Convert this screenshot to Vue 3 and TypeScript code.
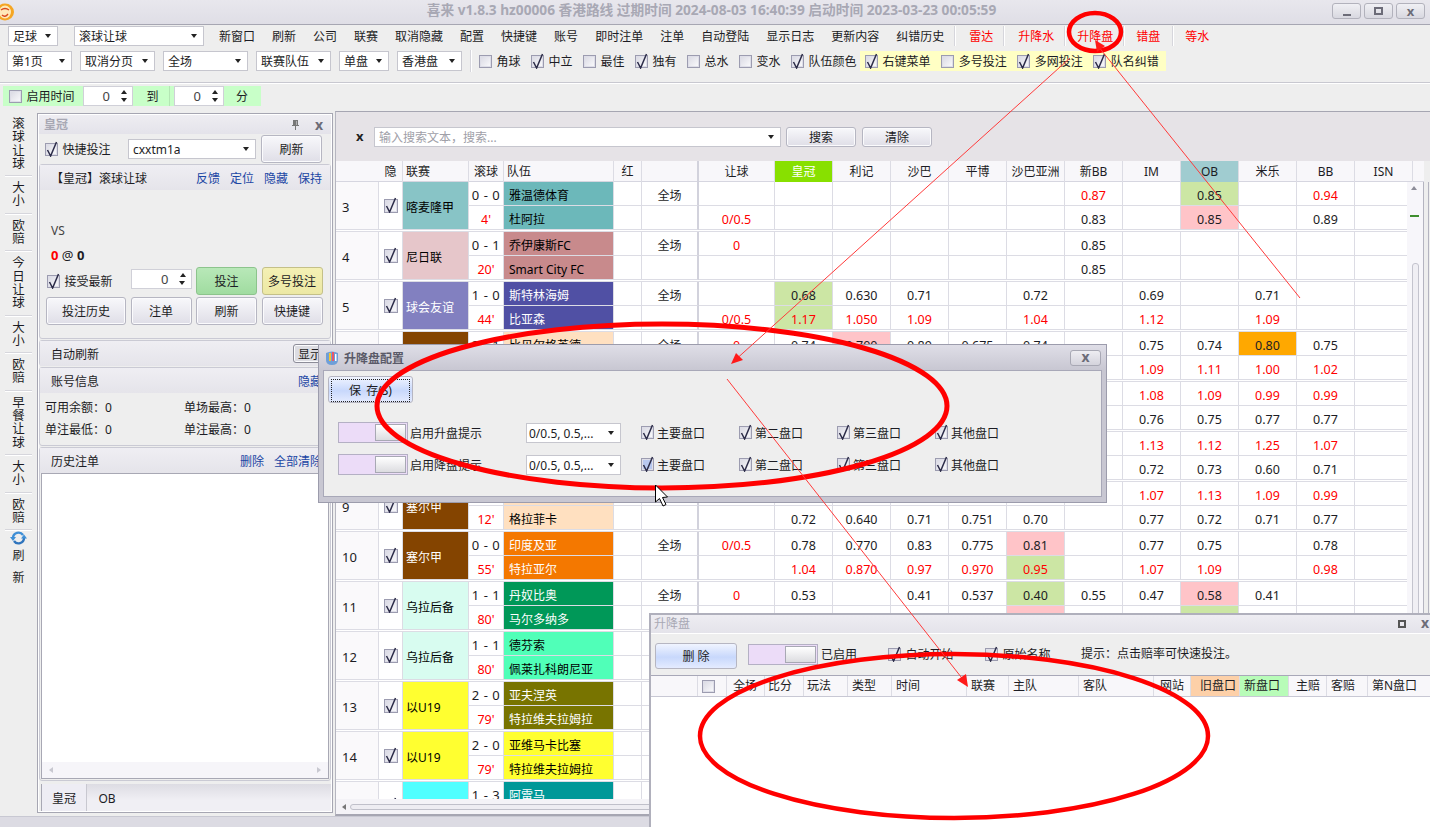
<script setup lang="ts">
interface Row {
  no: number
  league: string
  leagueBg: string
  leagueFg: string
  score: string
  min: string
  teams: string[]
  teamBg: string
  teamFg: string
  half: string
  hcap: string[]
  odds: string[]
}

interface Cell {
  text: string
  cls: string
}

const B = '#fff'
const K = '#000'

// odds line: "-" is an empty cell, suffix r = red text, g/p/o = cell colour
const rows: Row[] = [
  { no: 3, league: '喀麦隆甲', leagueBg: '#88c4c6', leagueFg: K, score: '0 - 0', min: "4'", teams: ['雅温德体育', '杜阿拉'], teamBg: '#6cb8ba', teamFg: K, half: '全场', hcap: ['', '0/0.5'],
    odds: ['- - - - - 0.87r - 0.85g - 0.94r -', '- - - - - 0.83 - 0.85p - 0.89 -'] },
  { no: 4, league: '尼日联', leagueBg: '#e6c6ca', leagueFg: K, score: '0 - 1', min: "20'", teams: ['乔伊康斯FC', 'Smart City FC'], teamBg: '#c88a8c', teamFg: K, half: '全场', hcap: ['0', ''],
    odds: ['- - - - - 0.85 - - - - -', '- - - - - 0.85 - - - - -'] },
  { no: 5, league: '球会友谊', leagueBg: '#8280c0', leagueFg: B, score: '1 - 0', min: "44'", teams: ['斯特林海姆', '比亚森'], teamBg: '#5050a4', teamFg: B, half: '全场', hcap: ['', '0/0.5'],
    odds: ['0.68g 0.630 0.71 - 0.72 - 0.69 - 0.71 - -', '1.17gr 1.050r 1.09r - 1.04r - 1.12r - 1.09r - -'] },
  { no: 6, league: '塞尔甲', leagueBg: '#844400', leagueFg: B, score: '2 - 1', min: "30'", teams: ['比贝尔格英德', '格拉菲卡'], teamBg: '#ffe0c0', teamFg: K, half: '全场', hcap: ['0', ''],
    odds: ['0.74 0.700p 0.89 0.675 0.74 - 0.75 0.74 0.80o 0.75 -', '- - - - - - 1.09r 1.11r 1.00r 1.02r -'] },
  { no: 7, league: '塞尔甲', leagueBg: '#844400', leagueFg: B, score: '', min: '', teams: ['', ''], teamBg: '#ffe0c0', teamFg: K, half: '', hcap: ['', ''],
    odds: ['- - - - - - 1.08r 1.09r 0.99r 0.99r -', '- - - - - - 0.76 0.75 0.77 0.77 -'] },
  { no: 8, league: '塞尔甲', leagueBg: '#844400', leagueFg: B, score: '', min: '', teams: ['', ''], teamBg: '#ffe0c0', teamFg: K, half: '', hcap: ['', ''],
    odds: ['- - - - - - 1.13r 1.12r 1.25r 1.07r -', '- - - - - - 0.72 0.73 0.60 0.71 -'] },
  { no: 9, league: '塞尔甲', leagueBg: '#844400', leagueFg: B, score: '', min: "12'", teams: ['', '格拉菲卡'], teamBg: '#ffe0c0', teamFg: K, half: '', hcap: ['', ''],
    odds: ['- - - - - - 1.07r 1.13r 1.09r 0.99r -', '0.72 0.640 0.71 0.751 0.70 - 0.77 0.72 0.71 0.77 -'] },
  { no: 10, league: '塞尔甲', leagueBg: '#844400', leagueFg: B, score: '0 - 0', min: "55'", teams: ['印度及亚', '特拉亚尔'], teamBg: '#f47800', teamFg: B, half: '全场', hcap: ['0/0.5', ''],
    odds: ['0.78 0.770 0.83 0.775 0.81p - 0.77 0.75 - 0.78 -', '1.04r 0.870r 0.97r 0.970r 0.95gr - 1.07r 1.09r - 0.98r -'] },
  { no: 11, league: '乌拉后备', leagueBg: '#d8fcf0', leagueFg: K, score: '1 - 1', min: "80'", teams: ['丹奴比奥', '马尔多纳多'], teamBg: '#009858', teamFg: B, half: '全场', hcap: ['0', ''],
    odds: ['0.53 - 0.41 0.537 0.40g 0.55 0.47 0.58p 0.41 - -', '- - - - -p - - -g - - -'] },
  { no: 12, league: '乌拉后备', leagueBg: '#d8fcf0', leagueFg: K, score: '1 - 1', min: "80'", teams: ['德芬索', '佩莱扎科朗尼亚'], teamBg: '#50ffb8', teamFg: K, half: '', hcap: ['', ''],
    odds: ['- - - - - - - - - - -', '- - - - - - - - - - -'] },
  { no: 13, league: '以U19', leagueBg: '#ffff30', leagueFg: K, score: '2 - 0', min: "79'", teams: ['亚夫涅英', '特拉维夫拉姆拉'], teamBg: '#787400', teamFg: B, half: '', hcap: ['', ''],
    odds: ['- - - - - - - - - - -', '- - - - - - - - - - -'] },
  { no: 14, league: '以U19', leagueBg: '#ffff30', leagueFg: K, score: '2 - 0', min: "79'", teams: ['亚维马卡比塞', '特拉维夫拉姆拉'], teamBg: '#ffff30', teamFg: K, half: '', hcap: ['', ''],
    odds: ['- - - - - - - - - - -', '- - - - - - - - - - -'] },
  { no: 15, league: '', leagueBg: '#50ffff', leagueFg: K, score: '1 - 3', min: '', teams: ['阿雷马', ''], teamBg: '#009898', teamFg: B, half: '', hcap: ['', ''],
    odds: ['- - - - - - - - - - -', '- - - - - - - - - - -'] },
]

function parseOdds(line: string): Cell[] {
  return line.split(' ').map((tok) => {
    const m = tok.match(/^(-|[\d.]+)([gpo]?)(r?)$/)
    if (!m) return { text: '', cls: '' }
    return {
      text: m[1] === '-' ? '' : m[1],
      cls: (m[2] ? 'bg-' + m[2] : '') + (m[3] ? ' red' : ''),
    }
  })
}

const menu = ['新窗口', '刷新', '公司', '联赛', '取消隐藏', '配置', '快捷键', '账号', '即时注单', '注单', '自动登陆', '显示日志', '更新内容', '纠错历史']
const redMenu = ['雷达', '升降水', '升降盘', '错盘', '等水']
const selects = [
  { t: '第1页', w: 65 },
  { t: '取消分页', w: 75 },
  { t: '全场', w: 85 },
  { t: '联赛队伍', w: 75 },
  { t: '单盘', w: 50 },
  { t: '香港盘', w: 65 },
]
const checks = [
  { t: '角球', on: false },
  { t: '中立', on: true },
  { t: '最佳', on: false },
  { t: '独有', on: true },
  { t: '总水', on: false },
  { t: '变水', on: false },
  { t: '队伍颜色', on: true },
]
const yellowChecks = [
  { t: '右键菜单', on: true },
  { t: '多号投注', on: false },
  { t: '多网投注', on: true },
  { t: '队名纠错', on: true },
]
const side = [
  ['滚', '球', '让', '球'],
  ['大', '小'],
  ['欧', '赔'],
  ['今', '日', '让', '球'],
  ['大', '小'],
  ['欧', '赔'],
  ['早', '餐', '让', '球'],
  ['大', '小'],
  ['欧', '赔'],
]
const books = ['皇冠', '利记', '沙巴', '平博', '沙巴亚洲', '新BB', 'IM', 'OB', '米乐', 'BB', 'ISN']
const marketChecks = ['主要盘口', '第二盘口', '第三盘口', '其他盘口']
const alerts = [
  { label: '启用升盘提示', blue: false },
  { label: '启用降盘提示', blue: true },
]
const logCols = [
  { t: '', w: 47, pad: 4, cls: '' },
  { t: '', w: 29, pad: 4, cls: 'has-cb' },
  { t: '全场', w: 38, pad: 6, cls: '' },
  { t: '比分', w: 39, pad: 3, cls: '' },
  { t: '玩法', w: 44, pad: 3, cls: '' },
  { t: '类型', w: 44, pad: 4, cls: '' },
  { t: '时间', w: 75, pad: 4, cls: '' },
  { t: '联赛', w: 42, pad: 4, cls: '' },
  { t: '主队', w: 70, pad: 4, cls: '' },
  { t: '客队', w: 75, pad: 4, cls: '' },
  { t: '网站', w: 37, pad: 6, cls: '' },
  { t: '旧盘口', w: 49, pad: 9, cls: 'old' },
  { t: '新盘口', w: 49, pad: 4, cls: 'new' },
  { t: '主赔', w: 38, pad: 7, cls: '' },
  { t: '客赔', w: 41, pad: 4, cls: '' },
  { t: '第N盘口', w: 70, pad: 4, cls: '' },
]
</script>

<template>
  <div class="app">
    <svg class="defs" aria-hidden="true">
      <symbol id="chk" viewBox="0 0 15 16">
        <path d="M3.5 9 L6.6 15 L12.5 1" fill="none" stroke="#2c2c48" stroke-width="1.5" />
      </symbol>
    </svg>

    <header class="titlebar">
      <svg class="logo" width="15" height="18" viewBox="0 0 15 18">
        <ellipse cx="5" cy="9" rx="9" ry="8.5" fill="#f5a623" />
        <ellipse cx="5" cy="9" rx="6" ry="6.5" fill="#ffe9b8" />
        <path d="M1 7 Q5 4 9 7 M2 12 Q5 15 8 11" fill="none" stroke="#d9481c" stroke-width="1.4" />
      </svg>
      <span class="title-text">喜来 v1.8.3 hz00006 香港路线 过期时间 2024-08-03 16:40:39 启动时间 2023-03-23 00:05:59</span>
      <div class="win-btns">
        <span class="win-btn"><i class="ico-min"></i></span>
        <span class="win-btn"><i class="ico-max"></i></span>
        <span class="win-btn x">x</span>
      </div>
    </header>

    <div class="row1">
      <div class="sel" style="width: 50px">足球</div>
      <div class="sel sel-wide">滚球让球</div>
      <span v-for="m in menu" :key="m" class="menu-item">{{ m }}</span>
      <template v-for="(m, i) in redMenu" :key="m">
        <i class="vsep" :class="{ tight: i >= 2, last: i === 4 }"></i>
        <span class="menu-item red">{{ m }}</span>
      </template>
    </div>

    <div class="row2">
      <div v-for="s in selects" :key="s.t" class="sel" :style="{ width: s.w + 'px' }">{{ s.t }}</div>
      <i class="vsep tall"></i>
      <div class="checks">
        <label v-for="c in checks" :key="c.t" class="chk">
          <span class="cb"><svg v-if="c.on"><use href="#chk" /></svg></span>{{ c.t }}
        </label>
      </div>
      <div class="checks yellow">
        <label v-for="c in yellowChecks" :key="c.t" class="chk">
          <span class="cb"><svg v-if="c.on"><use href="#chk" /></svg></span>{{ c.t }}
        </label>
      </div>
    </div>

    <div class="hsep"></div>

    <div class="row3">
      <label class="chk"><span class="cb"></span>启用时间</label>
      <div class="spin spin-a"><span>0</span><i class="arrows"></i></div>
      <span class="to">到</span>
      <i class="vsep green"></i>
      <div class="spin spin-b"><span>0</span><i class="arrows"></i></div>
      <span class="to to-min">分</span>
    </div>

    <div class="main">
      <nav class="strip">
        <div v-for="(item, i) in side" :key="i" class="strip-item">
          <span v-for="(ch, j) in item" :key="j">{{ ch }}</span>
        </div>
        <div class="strip-refresh">
          <svg width="17" height="14" viewBox="0 0 17 14">
            <path d="M3 7 A5.5 5.5 0 0 1 13 4" fill="none" stroke="#3f8fd6" stroke-width="2.4" />
            <path d="M14 7 A5.5 5.5 0 0 1 4 10" fill="none" stroke="#2f74bd" stroke-width="2.4" />
            <path d="M0 6 H6 L3 10 Z M11 7.5 H17 L14 3.5 Z" fill="#3f8fd6" />
          </svg>
          <span>刷</span>
          <span>新</span>
        </div>
      </nav>

      <aside class="panel">
        <div class="panel-title">
          <span class="panel-name">皇冠</span>
          <svg class="pin" width="9" height="10" viewBox="0 0 9 10"><path d="M2 0 H7 V5 H8 V6 H5 V10 H4 V6 H1 V5 H2 Z M5.5 1 V5 H6 V1 Z" fill="#777" /></svg>
          <span class="panel-x">x</span>
        </div>

        <div class="quick">
          <label class="chk"><span class="cb"><svg><use href="#chk" /></svg></span>快捷投注</label>
          <div class="sel quick-sel">cxxtm1a</div>
          <button class="btn quick-btn">刷新</button>
        </div>

        <section class="group g-bet">
          <div class="g-head">
            <span class="g-name g-crown">【皇冠】滚球让球</span>
            <span class="links"><a>反馈</a><a>定位</a><a>隐藏</a><a>保持</a></span>
          </div>
          <div class="bet-body">
            <div class="vs">VS</div>
            <div class="at"><b class="red">0</b> @ <b>0</b></div>
            <div class="bet-grid">
              <label class="chk accept"><span class="cb"><svg><use href="#chk" /></svg></span>接受最新</label>
              <div class="spin spin-bet"><span>0</span><i class="arrows"></i></div>
              <button class="btn green-btn">投注</button>
              <button class="btn yellow-btn">多号投注</button>
              <button class="btn">投注历史</button>
              <button class="btn">注单</button>
              <button class="btn">刷新</button>
              <button class="btn">快捷键</button>
            </div>
          </div>
        </section>

        <section class="group g-auto">
          <div class="g-head">
            <span class="g-name">自动刷新</span>
            <button class="btn show-btn">显示</button>
          </div>
        </section>

        <section class="group g-acc">
          <div class="g-head">
            <span class="g-name">账号信息</span>
            <span class="links"><a>隐藏</a></span>
          </div>
          <div class="acc-grid">
            <span>可用余额：0</span><span>单场最高：0</span>
            <span>单注最低：0</span><span>单注最高：0</span>
          </div>
        </section>

        <section class="group g-hist">
          <div class="g-head">
            <span class="g-name">历史注单</span>
            <span class="links hist-links"><a>删除</a><a>全部清除</a></span>
          </div>
          <div class="hist-list">
            <div class="hist-body"></div>
            <div class="hist-scroll"><i class="tri-l"></i><i class="tri-r"></i></div>
          </div>
        </section>

        <div class="tabs">
          <span class="tab on">皇冠</span>
          <span class="tab">OB</span>
        </div>
      </aside>

      <section class="board">
        <div class="search">
          <b class="search-x">x</b>
          <div class="sel search-sel">输入搜索文本，搜索...</div>
          <button class="btn search-btn">搜索</button>
          <button class="btn search-btn">清除</button>
        </div>

        <div class="grid-head">
          <span></span>
          <span class="hc">隐</span>
          <span class="hc left">联赛</span>
          <span class="hc">滚球</span>
          <span class="hc left">队伍</span>
          <span class="hc">红</span>
          <span class="hc thick"></span>
          <span class="hc">让球</span>
          <span v-for="b in books" :key="b" class="hc" :class="{ crown: b === '皇冠', ob: b === 'OB' }">{{ b }}</span>
        </div>

        <div class="grid-wrap">
          <div class="grid-body">
            <div v-for="r in rows" :key="r.no" class="row">
              <div class="c no span">{{ r.no }}</div>
              <div class="c span center"><span class="cb"><svg><use href="#chk" /></svg></span></div>
              <div class="c span league" :style="{ background: r.leagueBg, color: r.leagueFg }">{{ r.league }}</div>
              <div class="c center score">{{ r.score }}</div>
              <div class="c team" :style="{ background: r.teamBg, color: r.teamFg }">{{ r.teams[0] }}</div>
              <div class="c"></div>
              <div class="c center thick">{{ r.half }}</div>
              <div class="c center red num">{{ r.hcap[0] }}</div>
              <div v-for="(o, i) in parseOdds(r.odds[0])" :key="i" class="c center num" :class="o.cls">{{ o.text }}</div>

              <div class="c center red num">{{ r.min }}</div>
              <div class="c team" :style="{ background: r.teamBg, color: r.teamFg }">{{ r.teams[1] }}</div>
              <div class="c"></div>
              <div class="c thick"></div>
              <div class="c center red num">{{ r.hcap[1] }}</div>
              <div v-for="(o, i) in parseOdds(r.odds[1])" :key="'b' + i" class="c center num" :class="o.cls">{{ o.text }}</div>
            </div>
          </div>
          <div class="vscroll">
            <i class="tri-u"></i>
            <i class="tick"></i>
            <i class="thumb"></i>
          </div>
        </div>

        <div class="hscroll"><i class="tri-l dark"></i><i class="hthumb"></i></div>
      </section>
    </div>

    <footer class="status"></footer>

    <!-- floating config dialog -->
    <div class="dlg">
      <div class="dlg-title">
        <svg width="14" height="16" viewBox="0 0 14 16">
          <path d="M1 3 Q7 0 13 3 V10 Q13 15 7 15 Q1 15 1 10 Z" fill="#6f9fd8" />
          <path d="M4 3 H6 V11 H4 Z" fill="#f4c430" />
          <path d="M7 2 H9 V11 H7 Z" fill="#e8586a" />
          <path d="M10 4 H11.5 V11 H10 Z" fill="#fff" />
        </svg>
        <span>升降盘配置</span>
        <span class="dlg-x">x</span>
      </div>
      <div class="dlg-body">
        <button class="btn blue-btn save-btn"><span>保 存(S)</span></button>
        <div v-for="a in alerts" :key="a.label" class="alert-row">
          <div class="toggle"><i></i></div>
          <span class="alert-label">{{ a.label }}</span>
          <div class="sel alert-sel">0/0.5, 0.5,...</div>
          <i></i>
          <label v-for="(m, i) in marketChecks" :key="m" class="chk">
            <span class="cb" :class="{ 'cb-blue': a.blue && i === 0 }"><svg><use href="#chk" /></svg></span>{{ m }}
          </label>
        </div>
      </div>
    </div>

    <!-- floating log window -->
    <div class="logwin">
      <div class="log-title">
        <span>升降盘</span>
        <i class="log-max"></i>
        <span class="log-x">x</span>
      </div>
      <div class="log-tools">
        <button class="btn blue-btn del-btn">删 除</button>
        <div class="toggle"><i></i></div>
        <span class="enabled">已启用</span>
        <label class="chk auto"><span class="cb"><svg><use href="#chk" /></svg></span>自动开始</label>
        <label class="chk raw"><span class="cb"><svg><use href="#chk" /></svg></span>原始名称</label>
        <span class="tip">提示：点击赔率可快速投注。</span>
      </div>
      <div class="log-head">
        <span v-for="(c, i) in logCols" :key="i" class="lh" :class="c.cls" :style="{ width: c.w + 'px', paddingLeft: c.pad + 'px' }">
          <span v-if="c.cls === 'has-cb'" class="cb"></span>{{ c.t }}
        </span>
      </div>
      <div class="log-body"></div>
    </div>

    <!-- red markup drawn on the screenshot -->
    <svg class="marks" width="1430" height="827" viewBox="0 0 1430 827">
      <g fill="none" stroke="#ff0000">
        <ellipse cx="1095" cy="32" rx="26" ry="19" stroke-width="4.5" />
        <ellipse cx="662" cy="406" rx="285" ry="82" stroke-width="5" />
        <ellipse cx="954" cy="736" rx="254" ry="82" stroke-width="4.5" />
      </g>
      <g stroke="#ff3a3a" stroke-width="1" fill="none">
        <path d="M1070 58 L733 362" />
        <path d="M1300 298 L1098 46" />
        <path d="M727 379 L965 682" />
      </g>
      <g fill="#ff1a1a">
        <path d="M731 364 L736 353 L743 360 Z" />
        <path d="M1095 40 L1105 46 L1097 52 Z" />
        <path d="M968 687 L957 680 L966 674 Z" />
      </g>
      <path d="M655.5 485 V502 L659.5 498.5 L663 506 L666 504.5 L662.5 497.5 L667.5 497 Z" fill="#fff" stroke="#000" stroke-width="1" />
    </svg>
  </div>
</template>

<style>
html, body {
  margin: 0;
  overflow: hidden;
  background: #eee;
}
</style>

<style scoped>
.app {
  position: relative;
  width: 1430px;
  height: 827px;
  overflow: hidden;
  display: flex;
  flex-direction: column;
  background: #eeeeee;
  color: #1c1c24;
  font: 12px/16px "Noto Sans", "Noto Sans CJK SC", sans-serif;
}
.defs {
  position: absolute;
  width: 0;
  height: 0;
}
.red {
  color: #ff0000;
}

/* title bar */
.titlebar {
  position: relative;
  flex: none;
  height: 24px;
  box-sizing: content-box;
  border-bottom: 1px solid #a6a6b2;
  background: linear-gradient(#e8e7ed, #dfdee6);
  display: flex;
  align-items: center;
  justify-content: center;
}
.logo {
  position: absolute;
  left: 0;
  top: 3px;
}
.title-text {
  margin-left: -7px;
  padding-bottom: 5px;
  font-size: 13.7px;
  font-weight: 700;
  color: #a8a8b4;
}
.win-btns {
  position: absolute;
  right: 5px;
  top: 3px;
  display: flex;
  gap: 3px;
}
.win-btn {
  width: 27px;
  height: 14px;
  border: 1px solid #b2b2bc;
  border-radius: 3px;
  background: linear-gradient(#f0f0f4, #d8d8e0);
  display: flex;
  align-items: center;
  justify-content: center;
  font-weight: 700;
  font-size: 13px;
  color: #6c6c78;
}
.ico-min {
  width: 8px;
  height: 2px;
  margin-top: 7px;
  background: #6c6c78;
}
.ico-max {
  width: 5px;
  height: 4px;
  border: 2px solid #6c6c78;
}

/* toolbars */
.row1 {
  flex: none;
  height: 20px;
  margin-top: 1px;
  padding-left: 8px;
  display: flex;
  align-items: center;
  gap: 17px;
  white-space: nowrap;
}
.row1 > .sel:nth-child(2) {
  margin-right: -2px;
}
.row2 {
  flex: none;
  height: 20px;
  margin-top: 5px;
  padding-left: 7px;
  display: flex;
  align-items: center;
  gap: 8px;
  white-space: nowrap;
}
.menu-item {
  flex: none;
  padding-top: 2px;
}
.sel {
  position: relative;
  flex: none;
  box-sizing: border-box;
  height: 20px;
  padding-left: 4px;
  line-height: 20px;
  border: 1px solid #c6c6ce;
  background: #fff;
  overflow: hidden;
  white-space: nowrap;
}
.sel::after {
  content: "";
  position: absolute;
  right: 6px;
  top: 7px;
  border: 3.5px solid transparent;
  border-top: 4px solid #222;
  border-bottom: 0;
}
.sel-wide {
  width: 130px;
  margin-left: -1px;
}
.vsep {
  flex: none;
  width: 1px;
  height: 20px;
  margin: 0 -3px 0 -7px;
  background: #d6d6dc;
  box-shadow: 1px 0 0 #fff;
}
.vsep.tight {
  margin-right: -5px;
}
.vsep.last {
  margin-left: -5px;
}
.vsep.tall {
  margin: 0;
  height: 22px;
}
.vsep.green {
  margin: 0 4px 0 0;
  background: #b4e6b4;
  box-shadow: none;
}
.checks {
  display: flex;
  align-items: center;
  gap: 10.5px;
}
.chk {
  display: inline-flex;
  align-items: center;
  gap: 4.5px;
  padding-top: 2px;
  white-space: nowrap;
}
.chk .cb {
  margin-top: -2px;
}
.cb {
  position: relative;
  flex: none;
  display: inline-block;
  box-sizing: border-box;
  width: 13px;
  height: 13px;
  border: 1px solid #9c9cb0;
  background: linear-gradient(135deg, #d8d8e2, #fbfbfd);
  box-shadow: inset 0 0 0 1px #dedee8;
}
.cb svg {
  position: absolute;
  left: -2px;
  top: -3px;
  width: 15px;
  height: 16px;
  overflow: visible;
}
.cb-blue {
  background: #b8c8f0;
}
.yellow {
  height: 20px;
  margin-left: -4.5px;
  padding: 0 7px 0 5px;
  background: #ffffc4;
}
.hsep {
  flex: none;
  height: 1px;
  margin-top: 11px;
  border-top: 1px solid #c8c8d0;
  background: #fff;
}
.row3 {
  flex: none;
  width: 258px;
  height: 20px;
  margin: 2px 0 0 3px;
  display: flex;
  align-items: center;
  background: #c8ffc8;
}
.row3 .chk {
  padding-left: 6px;
  width: 80px;
  box-sizing: border-box;
}
.spin {
  position: relative;
  box-sizing: border-box;
  height: 20px;
  padding-right: 22px;
  background: #fff;
  border: 1px solid #d0d0d8;
  text-align: right;
  line-height: 18px;
  color: #444;
  font-size: 13px;
}
.spin-a,
.spin-b {
  width: 50px;
}
.to {
  width: 33px;
  padding-top: 2px;
  text-align: center;
  margin-left: 3px;
}
.to.to-min {
  width: 30px;
}
.arrows {
  position: absolute;
  right: 5px;
  top: 3px;
  width: 0;
  height: 0;
  border: 3.5px solid transparent;
  border-bottom: 4px solid #222;
  border-top: 0;
}
.arrows::after {
  content: "";
  position: absolute;
  left: -3.5px;
  top: 8px;
  border: 3.5px solid transparent;
  border-top: 4px solid #222;
  border-bottom: 0;
}

/* main area */
.main {
  flex: 1;
  min-height: 0;
  margin-top: 5px;
  display: flex;
}
.strip {
  flex: none;
  width: 37px;
  padding-top: 1px;
  box-sizing: border-box;
}
.strip-item {
  margin: 0 5px;
  padding: 5px 0;
  border-bottom: 1px solid #d6d6dc;
  box-shadow: 0 1px 0 #fff;
  display: flex;
  flex-direction: column;
  align-items: center;
  font-size: 12.5px;
  line-height: 13.3px;
}
.strip-refresh {
  display: flex;
  flex-direction: column;
  align-items: center;
  padding-top: 1px;
  line-height: 22px;
}
.strip-refresh svg {
  margin-bottom: 0;
}

/* left panel */
.panel {
  flex: none;
  width: 296px;
  box-sizing: border-box;
  margin: 2px 0 3px;
  border: 1px solid #a6a6b2;
  box-shadow: inset 0 0 0 1px #fff;
  display: flex;
  flex-direction: column;
}
.panel-title {
  flex: none;
  height: 19px;
  padding: 0 8px 0 5px;
  margin: 1px 1px 0;
  background: linear-gradient(#eeedf2, #e4e3ea);
  display: flex;
  align-items: center;
}
.panel-name {
  flex: 1;
  font-weight: 700;
  color: #a8a8b4;
}
.pin {
  margin-right: 15px;
}
.panel-x {
  font: 700 14px "Noto Sans", sans-serif;
  color: #6c6c78;
}
.quick {
  flex: none;
  height: 30px;
  padding-left: 7px;
  display: flex;
  align-items: center;
}
.quick .chk {
  width: 83px;
  flex: none;
  box-sizing: border-box;
}
.quick-sel {
  width: 128px;
}
.quick-btn {
  width: 61px;
  height: 28px;
  margin-left: 5px;
}
.btn {
  box-sizing: border-box;
  padding: 2px 0 0;
  border: 1px solid #b6b6c2;
  border-radius: 3px;
  font: inherit;
  color: inherit;
  background: linear-gradient(#f8f8fb, #dfdee7);
  box-shadow: inset 0 0 0 1px #fbfbfd;
}
.group {
  flex: none;
  box-sizing: border-box;
  margin: 0 1px 1px;
  border: 1px solid #cacad4;
  border-radius: 3px;
}
.g-head {
  height: 25px;
  padding: 0 8px 0 11px;
  background: linear-gradient(#efeef3, #e5e4ea);
  display: flex;
  align-items: center;
  justify-content: space-between;
  white-space: nowrap;
}
.g-name,
.links {
  padding-top: 3px;
}
.links {
  display: flex;
  gap: 10px;
}
.links a {
  color: #1b46a4;
}
.g-bet {
  height: 175px;
}
.bet-body {
  padding: 32px 6px 0;
}
.vs {
  padding-left: 5px;
  height: 18px;
  line-height: 18px;
  color: #444;
}
.at {
  margin-top: 6px;
  padding-left: 5px;
  height: 18px;
  line-height: 18px;
  font-size: 13px;
}
.bet-grid {
  margin-top: 3px;
  display: grid;
  grid-template-columns: 80px 61px 61px 61px;
  grid-template-rows: 28px 28px;
  column-gap: 4.5px;
  row-gap: 2px;
}
.accept {
  padding-left: 1px;
}
.spin-bet {
  align-self: start;
  margin-top: 2px;
}
.green-btn {
  background: linear-gradient(#b8e8b8, #a0dca0);
  border-color: #8cc48c;
  box-shadow: none;
}
.yellow-btn {
  background: linear-gradient(#f4f0b4, #ece8a4);
  border-color: #c4c088;
  box-shadow: none;
}
.g-auto {
  height: 26px;
}
.show-btn {
  width: 36px;
  height: 19px;
  margin-right: -7px;
  text-align: left;
  padding-left: 4px;
  background: #dcdce2;
  border-color: #8c8c98;
  flex: none;
}
.g-acc {
  height: 79px;
}
.acc-grid {
  padding: 4px 0 0 5px;
  display: grid;
  grid-template-columns: 139px 139px;
  grid-auto-rows: 22px;
  align-items: center;
  white-space: nowrap;
}
.g-hist {
  flex: 1;
  margin-bottom: 3px;
  display: flex;
  flex-direction: column;
  min-height: 0;
}
.hist-list {
  flex: 1;
  min-height: 0;
  margin: 0 1px 1px;
  border: 1px solid #a8a8b4;
  background: #fff;
  display: flex;
  flex-direction: column;
}
.hist-body {
  flex: 1;
}
.hist-scroll {
  flex: none;
  height: 16px;
  background: #f6f5f9;
  display: flex;
  align-items: center;
  justify-content: space-between;
  padding: 0 7px;
}
.tri-l {
  border: 3.5px solid transparent;
  border-right: 4px solid #c8c8d0;
  border-left: 0;
}
.tri-r {
  border: 3.5px solid transparent;
  border-left: 4px solid #c8c8d0;
  border-right: 0;
}
.tabs {
  flex: none;
  height: 27px;
  margin: 0 1px 1px 3px;
  background: linear-gradient(#dddce3, #f0eff4 60%);
  display: flex;
  align-items: center;
}
.tab {
  width: 46px;
  height: 27px;
  line-height: 30px;
  text-align: center;
}
.tab.on {
  background: #eeedf4;
  border-left: 1px solid #a8a8b4;
  border-right: 1px solid #c8c8d0;
  box-sizing: border-box;
}
.tab:not(.on) {
  width: 36px;
  padding-left: 2px;
}

/* odds board */
.board {
  flex: none;
  width: 1095px;
  margin: 0 0 0 2px;
  box-sizing: border-box;
  border-top: 1px solid #a6a6b2;
  border-left: 1px solid #b6b6c0;
  border-bottom: 2px solid #a6a6b2;
  display: flex;
  flex-direction: column;
  overflow: hidden;
}
.search {
  flex: none;
  height: 49px;
  background: #e6e3e7;
  display: flex;
  align-items: center;
  padding-left: 20px;
  gap: 5px;
}
.search-x {
  width: 13px;
  font-size: 13px;
  color: #222;
  margin-bottom: 1px;
}
.search-sel {
  width: 407px;
  color: #a0a0a8;
}
.search-btn {
  width: 70px;
  height: 20px;
  margin-right: 1px;
}
.grid-head,
.row {
  display: grid;
  grid-template-columns: 43px 24px 66px 35px 110px 28px 57px 76px repeat(11, 58px);
}
.grid-head {
  flex: none;
  width: 1088px;
  height: 21px;
  background: #f8f7fa;
  border-bottom: 1px solid #d6d6e0;
  box-sizing: border-box;
}
.hc {
  border-right: 1px solid #dcdce4;
  text-align: center;
  line-height: 22px;
  white-space: nowrap;
}
.hc.left {
  text-align: left;
  padding-left: 3px;
}
.hc.crown {
  background: #88e000;
  color: #fff;
}
.hc.ob {
  background: #a0ccd0;
  box-shadow: inset 0 -1px 0 #80a8b0;
}
.hc.thick,
.c.thick {
  border-right: 2px solid #d2d2dc;
}
.grid-wrap {
  flex: 1;
  min-height: 0;
  margin-right: 1px;
  border-right: 1px solid #b4b4c0;
  display: flex;
}
.grid-body {
  flex: none;
  width: 1071px;
  overflow: hidden;
  background: #fff;
}
.row {
  grid-template-rows: 24px 24px;
  height: 50px;
  box-sizing: border-box;
  padding-bottom: 1px;
  border-bottom: 1px solid #dcdce4;
  background: #fff;
}
.c {
  box-sizing: border-box;
  border-right: 1px solid #dcdce4;
  border-bottom: 1px solid #dcdce4;
  line-height: 27px;
  white-space: nowrap;
  overflow: hidden;
  background-clip: padding-box;
}
.c.span {
  grid-row: span 2;
  line-height: 51px;
}
.c.no {
  padding-left: 6px;
  background: #faf9fb;
  font-size: 13px;
}
.c.center {
  text-align: center;
}
.c.span.center {
  display: flex;
  align-items: center;
  justify-content: center;
}
.c.span.center .cb {
  width: 14px;
  height: 14px;
}
.c.league {
  padding-left: 3px;
}
.c.team {
  padding-left: 5px;
}
.c.num {
  font-size: 12.5px;
}
.c.score {
  font-size: 13px;
  letter-spacing: 0.5px;
}
.bg-g {
  background: #cce6a4;
}
.bg-p {
  background: #ffc4c8;
}
.bg-o {
  background: #ffa800;
}
.vscroll {
  position: relative;
  flex: none;
  width: 16px;
  background: #f7f6fa;
  border-right: 1px solid #b4b4c0;
}
.tri-u {
  position: absolute;
  left: 4px;
  top: 4px;
  border: 3.5px solid transparent;
  border-bottom: 4px solid #8c8c98;
  border-top: 0;
}
.tick {
  position: absolute;
  left: 3px;
  top: 33px;
  width: 9px;
  height: 2px;
  background: #3e8e2e;
}
.thumb {
  position: absolute;
  left: 5px;
  top: 81px;
  bottom: 2px;
  width: 5px;
  border: 1px solid #c4c4ce;
  border-radius: 3px;
  background: #f0eff4;
}
.hscroll {
  position: relative;
  flex: none;
  height: 15px;
  background: #f4f3f7;
  display: flex;
  align-items: center;
  padding-left: 6px;
}
.tri-l.dark {
  border-right-color: #777;
}
.hthumb {
  margin-left: 4px;
  width: 700px;
  height: 4px;
  border: 1px solid #c0c0ca;
  border-radius: 3px;
  background: #eeedf2;
}
.status {
  flex: none;
  height: 10px;
  border-top: 1px solid #c8c8d2;
  background: #dcdbe3;
}

/* floating windows */
.dlg {
  position: absolute;
  left: 318px;
  top: 344px;
  width: 789px;
  height: 159px;
  box-sizing: border-box;
  border: 1px solid #9c9cac;
  background: #c8c7d2;
  padding: 0 4px 5px;
  display: flex;
  flex-direction: column;
}
.dlg-title {
  flex: none;
  height: 25px;
  margin: 0 -4px;
  padding: 0 5px 0 6px;
  background: linear-gradient(#dfdee7, #c8c7d2);
  display: flex;
  align-items: center;
  gap: 5px;
  font-weight: 700;
  color: #5a5a68;
}
.dlg-title > span:first-of-type {
  padding-top: 2px;
}
.dlg-x {
  margin-left: auto;
  width: 29px;
  height: 14px;
  line-height: 12px;
  text-align: center;
  font-size: 14px;
  color: #6c6c78;
  border: 1px solid #a8a8b4;
  border-radius: 3px;
  background: linear-gradient(#eeedf2, #d4d3dc);
}
.dlg-body {
  flex: 1;
  border: 1px solid #a8a8b8;
  background: #eeeeee;
  padding: 5px 0 0 4px;
}
.blue-btn {
  background: linear-gradient(#f0f4ff, #c8d8fc 55%, #e4ebff);
  box-shadow: none;
}
.save-btn {
  display: block;
  width: 85px;
  height: 27px;
  padding: 2px;
}
.save-btn span {
  display: block;
  height: 21px;
  line-height: 22px;
  border: 1px dotted #222;
  word-spacing: 2px;
}
.alert-row {
  height: 21px;
  margin-bottom: 11px;
  margin-left: 10px;
  display: grid;
  grid-template-columns: 72px 116px 95px 20px 98px 98px 98px 98px;
  align-items: center;
  white-space: nowrap;
}
.save-btn + .alert-row {
  margin-top: 19px;
}
.alert-row .chk {
  gap: 3px;
}
.alert-label {
  padding-top: 2px;
}
.toggle {
  position: relative;
  width: 70px;
  height: 21px;
  box-sizing: border-box;
  border: 1px solid #b4b0c4;
  background: #ecdcf8;
}
.toggle i {
  position: absolute;
  right: 1px;
  top: 1px;
  bottom: 1px;
  width: 31px;
  border: 1px solid #a8a8b4;
  box-sizing: border-box;
  background: linear-gradient(#fff, #dcdce0);
}
.alert-sel {
  width: 95px;
  padding-left: 2px;
}
.logwin {
  position: absolute;
  left: 649px;
  top: 613px;
  width: 790px;
  height: 220px;
  box-sizing: border-box;
  border: 2px solid #b0b0bc;
  border-bottom: 0;
  border-right: 0;
  background: #eee;
  display: flex;
  flex-direction: column;
}
.log-title {
  position: relative;
  flex: none;
  height: 18px;
  padding-left: 3px;
  display: flex;
  align-items: center;
  color: #a8a8b4;
  background: linear-gradient(#eeedf2, #e4e3ea);
  border-bottom: 1px solid #fff;
}
.log-max {
  position: absolute;
  left: 747px;
  top: 5px;
  width: 4px;
  height: 4px;
  border: 2px solid #555;
}
.log-x {
  position: absolute;
  left: 770px;
  top: 0;
  font-weight: 700;
  font-size: 14px;
  color: #6c6c78;
}
.log-tools {
  flex: none;
  height: 41px;
  position: relative;
  display: flex;
  align-items: center;
  white-space: nowrap;
}
.del-btn {
  width: 82px;
  height: 26px;
  margin-left: 4px;
  margin-top: 2px;
}
.log-tools .toggle {
  margin-left: 11px;
  margin-top: -1px;
}
.enabled {
  margin-left: 3px;
  margin-top: 1px;
}
.auto {
  margin-left: 31px;
  width: 97px;
  margin-top: -1px;
}
.raw {
  width: 95px;
  margin-top: -1px;
}
.tip {
  margin-left: 1px;
  margin-top: -1px;
}
.log-head {
  flex: none;
  height: 22px;
  display: flex;
  border-top: 1px solid #a8a8b8;
  border-bottom: 1px solid #c8c8d4;
  box-sizing: border-box;
  background: #f8f7fa;
}
.lh {
  flex: none;
  box-sizing: border-box;
  border-right: 1px solid #dcdce4;
  line-height: 20px;
  white-space: nowrap;
}
.lh.has-cb {
  display: flex;
  align-items: center;
}
.lh.old {
  background: #fdd0a8;
}
.lh.new {
  background: #b8fcb8;
}
.log-body {
  flex: 1;
  background: #fff;
}
.marks {
  position: absolute;
  left: 0;
  top: 0;
  pointer-events: none;
}
</style>
